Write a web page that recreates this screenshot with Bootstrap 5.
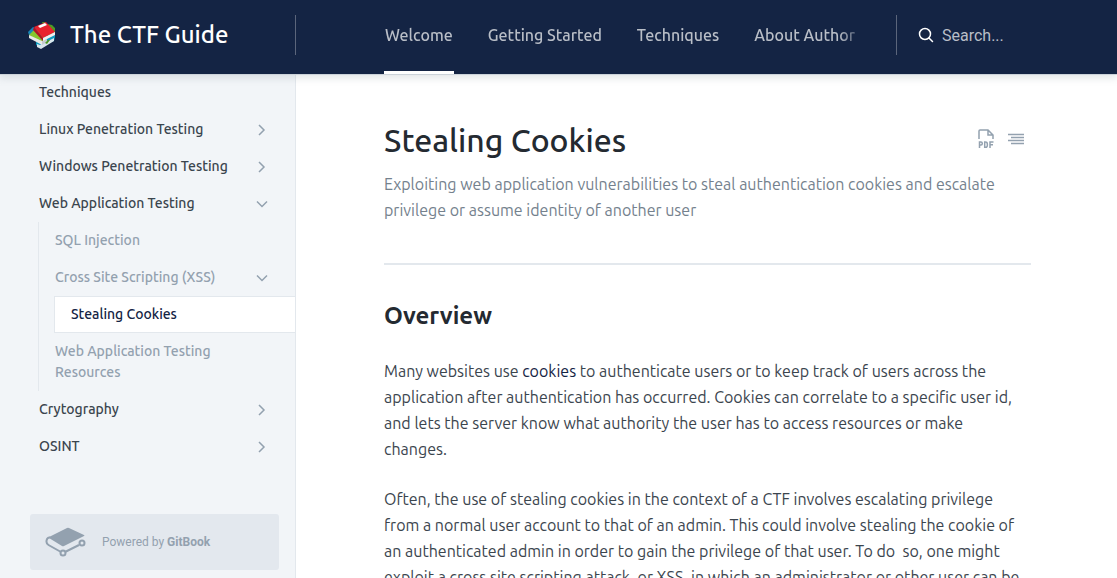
<!DOCTYPE html>
<html lang="en">
<head>
<meta charset="utf-8">
<meta name="viewport" content="width=device-width, initial-scale=1">
<title>Stealing Cookies - The CTF Guide</title>
<link rel="stylesheet" href="https://cdn.jsdelivr.net/npm/bootstrap@5.3.0/dist/css/bootstrap.min.css">
<style>
  :root { --navy: #142444; --slate: #93a1af; --line: #e3e8ed; --ink: #242a31; }
  body { font-family: Ubuntu, "Noto Sans", sans-serif; color: #3b454e; }
  a { text-decoration: none; }

  .site-header { height: 74px; background: var(--navy); box-shadow: 0 1px #ccd3da, 0 3px 8px 1px rgba(116,129,141,.2); z-index: 2; }
  .header-row { padding-bottom: 4px; }
  .brand-cell { width: 296px; padding-left: 28px; }
  .brand-link { gap: 14px; font-size: 24px; font-weight: 500; line-height: 32px; color: #fff; }
  .divider { width: 1px; height: 40px; background: #5b657b; }
  .tabs { margin: 0 38px -4px 88px; width: 474px; height: 74px; gap: 33px;
    -webkit-mask-image: linear-gradient(to right, #000 455px, transparent 482px); mask-image: linear-gradient(to right, #000 455px, transparent 482px); }
  .tab { font-size: 16px; font-weight: 500; line-height: 24px; color: #b9bec7; padding: 23px 1px 24px; border-bottom: 3px solid transparent; white-space: nowrap; }
  .tab.active { border-color: #fff; }
  .search-wrap { margin-left: 21px; gap: 8px; color: #fff; }
  .search-input { font-family: Roboto, sans-serif; font-size: 16px; line-height: 24px; color: #fff; background: none; border: 0; padding: 2px 0 0; width: 140px; }
  .search-input::placeholder { color: #b9bec7; opacity: 1; }

  .sidebar { width: 296px; background: #f2f5f8; border-right: 1px solid var(--line); }
  .toc { padding-left: 22px; font-size: 14px; font-weight: 500; line-height: 21px; }
  .toc ul { margin-left: 16px; }
  .toc-line { box-shadow: inset 1px 0 var(--line); }
  .toc-link { color: #3b454e; padding: 7px 26px 7px 16px; border: 1px solid transparent; border-right: 0; }
  .toc ul .toc-link { color: var(--slate); }
  .toc ul .toc-link.current { color: var(--navy); background: #fff; border-color: var(--line); }
  .toc-link svg { color: var(--slate); flex: none; }
  .powered { margin: 0 16px 8px 30px; height: 56px; padding-left: 15px; gap: 15px; background: #e3e8ee; border-radius: 3px;
    font-family: Roboto, sans-serif; font-size: 12px; color: #93a1af; }

  .article { max-width: 735px; padding: 46px 0 0 88px; width: calc(100% - 86px); }
  .page-title { font-size: 32px; font-weight: 500; line-height: 40px; color: var(--ink); }
  .page-head { padding-bottom: 40px; border-bottom: 2px solid var(--line); }
  .text-run { font-size: 16px; line-height: 26px; margin: 0 0 24px; }
  .lede { color: #74818d; margin: 11px 0 0; }
  .section-title { font-size: 24px; font-weight: 700; line-height: 32px; color: var(--ink); margin: 35px 0 26px; }
  .text-run a { color: var(--navy); }
  .tools { gap: 14px; padding: 0 7px 2px 0; }
  .tools button { color: #93a1af; line-height: 1; }
</style>
</head>
<body class="vh-100 d-flex flex-column overflow-hidden bg-white">
<svg class="d-none" aria-hidden="true">
  <symbol id="right" viewBox="0 0 14 14"><path d="M4 2l5 5-5 5" fill="none" stroke="currentColor" stroke-width="1.5"/></symbol>
  <symbol id="down" viewBox="0 0 14 14"><path d="M2 4.500l5 5 5-5" fill="none" stroke="currentColor" stroke-width="1.5"/></symbol>
</svg>

<header class="site-header flex-shrink-0 position-relative">
  <div class="header-row d-flex align-items-center h-100">
    <div class="brand-cell d-flex align-items-center justify-content-between flex-shrink-0">
      <a href="#" class="brand-link d-flex align-items-center">
        <svg width="28" height="28" viewBox="0 0 28 28" aria-hidden="true">
          <path d="M0 11L5 6l9 4v10L1 14z" fill="#1685b8"/>
          <path d="M14 1h3l2 2 5 1 3 3v7l-6 2z" fill="#4f9a22"/>
          <path d="M8 21l6-5 13-3v3l-1 4-14 6-4-2z" fill="#0d9bbf"/>
          <path d="M9 23l3 1 14-7v3l-13 8-4-2z" fill="#d9e6ec"/>
          <path d="M1 14l6-6 12 12-6 2z" fill="#86c72e"/>
          <path d="M1 14l13 6v4L1 17z" fill="#e9e9e6"/>
          <path d="M14 20l5-2v3l-5 3z" fill="#c5cbd0"/>
          <path d="M6 6l12-5 9 10-12 6z" fill="#e8212d"/>
          <path d="M6 6l9 11v3L5 9z" fill="#b01326"/>
          <path d="M15 17l12-6v3l-12 6z" fill="#f1eeee"/>
          <path d="M10 5l7-3 2 2-7 3z" fill="#fff"/>
          <path d="M17 22l3-3 2 0-3 4z" fill="#4f9a22"/>
        </svg>
        <span>The CTF Guide</span>
      </a>
      <span class="divider"></span>
    </div>
    <nav class="tabs d-flex overflow-hidden flex-shrink-0" aria-label="Sections">
      <a href="#" class="tab active">Welcome</a>
      <a href="#" class="tab">Getting Started</a>
      <a href="#" class="tab">Techniques</a>
      <a href="#" class="tab">About Author</a>
    </nav>
    <span class="divider flex-shrink-0"></span>
    <label class="search-wrap d-flex align-items-center">
      <svg width="16" height="16" viewBox="0 0 16 16" fill="none" stroke="currentColor" stroke-width="1.5" stroke-linecap="round" aria-hidden="true"><circle cx="7" cy="7" r="5.500"/><path d="M11 11l3.500 3.500"/></svg>
      <input type="text" class="search-input" placeholder="Search..." aria-label="Search">
    </label>
  </div>
</header>

<div class="d-flex flex-grow-1 overflow-hidden">
  <aside class="sidebar d-flex flex-column flex-shrink-0">
    <nav class="toc flex-grow-1 overflow-hidden" aria-label="Contents">
      <a href="#" class="toc-link d-flex justify-content-between">Techniques</a>
      <a href="#" class="toc-link d-flex justify-content-between align-items-center">Linux Penetration Testing<svg width="14" height="14"><use href="#right"/></svg></a>
      <a href="#" class="toc-link d-flex justify-content-between align-items-center">Windows Penetration Testing<svg width="14" height="14"><use href="#right"/></svg></a>
      <a href="#" class="toc-link d-flex justify-content-between align-items-center">Web Application Testing<svg width="14" height="14"><use href="#down"/></svg></a>
      <ul class="list-unstyled mb-0 toc-line">
        <li><a href="#" class="toc-link d-flex">SQL Injection</a></li>
        <li><a href="#" class="toc-link d-flex justify-content-between align-items-center">Cross Site Scripting (XSS)<svg width="14" height="14"><use href="#down"/></svg></a>
          <ul class="list-unstyled mb-0">
            <li><a href="#" class="toc-link current d-flex" aria-current="page">Stealing Cookies</a></li>
          </ul>
        </li>
        <li><a href="#" class="toc-link d-block">Web Application Testing<br>Resources</a></li>
      </ul>
      <a href="#" class="toc-link d-flex justify-content-between align-items-center">Crytography<svg width="14" height="14"><use href="#right"/></svg></a>
      <a href="#" class="toc-link d-flex justify-content-between align-items-center">OSINT<svg width="14" height="14"><use href="#right"/></svg></a>
    </nav>
    <a href="#" class="powered d-flex align-items-center flex-shrink-0">
      <svg width="42" height="30" viewBox="0 0 42 30" fill="none" stroke="currentColor" aria-hidden="true">
        <path d="M4 10L22 1q1-.5 2 0l15 7q1 .5 0 1L19 19q-1 .5-2 0L4 11z" fill="currentColor" stroke="none"/>
        <path d="M5 10.500c-3.500-.5-5 5.500-1.500 7.500L16 25M20 25l14-7" stroke-width="2"/>
        <circle cx="18" cy="26" r="2.500" stroke-width="2"/>
        <circle cx="37" cy="16" r="2.500" stroke-width="2"/>
      </svg>
      <span>Powered by <strong>GitBook</strong></span>
    </a>
  </aside>

  <main class="flex-grow-1 overflow-hidden">
    <article class="article">
      <header class="page-head">
        <div class="d-flex justify-content-between">
          <h1 class="page-title mb-0">Stealing Cookies</h1>
          <div class="tools d-flex align-items-center">
            <button type="button" class="btn p-0 border-0" aria-label="Export as PDF">
              <svg width="16" height="20" viewBox="0 0 16 20" fill="none" stroke="currentColor" stroke-width="1.500" class="d-block"><path d="M1 10V2q0-1 1-1h8l5 5v4M10 1v5h5"/><path d="M1.500 19v-6h1.500q1.300 0 1.300 1.500T3 16H1.500M6.700 13v5.300h1q1.700 0 1.700-2.600t-1.700-2.600zM12 19v-6h3.500M12 15.800h3"/></svg>
            </button>
            <button type="button" class="btn p-0 border-0" aria-label="Page outline">
              <svg width="16" height="20" viewBox="0 0 16 20" fill="none" stroke="currentColor" stroke-width="1.300" class="d-block"><path d="M0 5.500h16M3 8.500h13M0 11.500h16M3 14.500h13"/></svg>
            </button>
          </div>
        </div>
        <p class="text-run lede">Exploiting web application vulnerabilities to steal authentication cookies and escalate<br>privilege or assume identity of another user</p>
      </header>
      <h2 class="section-title">Overview</h2>
      <p class="text-run">Many websites use <a href="#">cookies</a> to authenticate users or to keep track of users across the<br>application after authentication has occurred. Cookies can correlate to a specific user id,<br>and lets the server know what authority the user has to access resources or make<br>changes.</p>
      <p class="text-run">Often, the use of stealing cookies in the context of a CTF involves escalating privilege<br>from a normal user account to that of an admin. This could involve stealing the cookie of<br>an authenticated admin in order to gain the privilege of that user. To do&nbsp; so, one might<br>exploit a cross site scripting attack, or XSS, in which an administrator or other user can be</p>
    </article>
  </main>
</div>
<script src="https://cdn.jsdelivr.net/npm/bootstrap@5.3.0/dist/js/bootstrap.bundle.min.js"></script>
</body>
</html>
